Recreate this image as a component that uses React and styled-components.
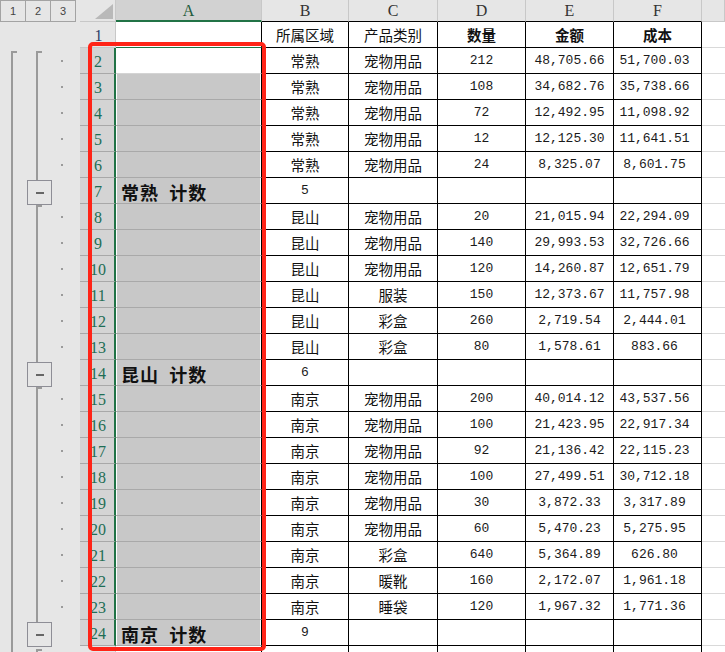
import React from 'react';
import styled, { createGlobalStyle } from 'styled-components';

const GlobalStyle = createGlobalStyle`
  html, body { margin: 0; padding: 0; background: #fff; }
  body { font-family: "Noto Sans CJK SC", "Liberation Sans", sans-serif; }
`;

const GREEN = '#217346';
const CJK = '"Noto Sans CJK SC", sans-serif';
const MONO = '"Liberation Mono", "DejaVu Sans Mono", monospace';

const COLS = ['A', 'B', 'C', 'D', 'E', 'F', ''];

const rows = [
  ['', '常熟', '宠物用品', '212', '48,705.66', '51,700.03'],
  ['', '常熟', '宠物用品', '108', '34,682.76', '35,738.66'],
  ['', '常熟', '宠物用品', '72', '12,492.95', '11,098.92'],
  ['', '常熟', '宠物用品', '12', '12,125.30', '11,641.51'],
  ['', '常熟', '宠物用品', '24', '8,325.07', '8,601.75'],
  ['常熟  计数', '5', '', '', '', ''],
  ['', '昆山', '宠物用品', '20', '21,015.94', '22,294.09'],
  ['', '昆山', '宠物用品', '140', '29,993.53', '32,726.66'],
  ['', '昆山', '宠物用品', '120', '14,260.87', '12,651.79'],
  ['', '昆山', '服装', '150', '12,373.67', '11,757.98'],
  ['', '昆山', '彩盒', '260', '2,719.54', '2,444.01'],
  ['', '昆山', '彩盒', '80', '1,578.61', '883.66'],
  ['昆山  计数', '6', '', '', '', ''],
  ['', '南京', '宠物用品', '200', '40,014.12', '43,537.56'],
  ['', '南京', '宠物用品', '100', '21,423.95', '22,917.34'],
  ['', '南京', '宠物用品', '92', '21,136.42', '22,115.23'],
  ['', '南京', '宠物用品', '100', '27,499.51', '30,712.18'],
  ['', '南京', '宠物用品', '30', '3,872.33', '3,317.89'],
  ['', '南京', '宠物用品', '60', '5,470.23', '5,275.95'],
  ['', '南京', '彩盒', '640', '5,364.89', '626.80'],
  ['', '南京', '暖靴', '160', '2,172.07', '1,961.18'],
  ['', '南京', '睡袋', '120', '1,967.32', '1,771.36'],
  ['南京  计数', '9', '', '', '', ''],
  ['', '', '', '', '', ''],
];

// outline groups: [first detail row, summary row]
const groups = [[2, 7], [8, 14], [15, 24]];
const rowTop = (r) => 48 + (r - 2) * 26;

const Page = styled.div`
  position: relative;
  width: 725px;
  height: 652px;
  overflow: hidden;
  display: flex;
`;

const Gutter = styled.div`
  width: 80px;
  flex: none;
  background: #e6e6e6;
  display: flex;
  flex-direction: column;
`;

const Levels = styled.div`
  display: flex;
  height: 22px;
`;

const LevelButton = styled.div`
  width: 26px;
  height: 22px;
  box-sizing: border-box;
  border: 1px solid #a3a3a3;
  margin-right: -1px;
  display: flex;
  align-items: center;
  justify-content: center;
  font: 11px "Liberation Sans", sans-serif;
  color: #444;
`;

const Grid = styled.div`
  flex: 1;
  display: grid;
  grid-template-columns: 36px 146px 87px 89px 88px 88px 88px 1fr;
  grid-template-rows: 22px;
  grid-auto-rows: 26px;
`;

const Corner = styled.div`
  background: #e6e6e6;
  border-right: 1px solid #c8c8c8;
  border-bottom: 1px solid #c8c8c8;
  box-sizing: border-box;
  display: flex;
  align-items: flex-end;
  justify-content: flex-end;
  padding: 0 2px 2px 0;
`;

const ColHead = styled.div`
  box-sizing: border-box;
  background: ${(p) => (p.$active ? '#d2d2d2' : '#e6e6e6')};
  border-right: 1px solid #c8c8c8;
  border-bottom: ${(p) => (p.$active ? `2px solid ${GREEN}` : `1px solid ${p.$line}`)};
  display: flex;
  align-items: center;
  justify-content: center;
  font: 16px "Liberation Serif", serif;
  color: ${(p) => (p.$active ? '#1e5c3c' : '#333')};
  padding-top: ${(p) => (p.$active ? '1px' : '0')};
`;

const RowHead = styled.div`
  box-sizing: border-box;
  background: ${(p) => (p.$selected ? '#d4d4d4' : '#e6e6e6')};
  border-bottom: 1px solid ${(p) => (p.$selected ? '#a8a8a8' : '#c8c8c8')};
  border-right: ${(p) => (p.$selected ? `2px solid ${GREEN}` : '1px solid #c8c8c8')};
  display: flex;
  align-items: flex-end;
  justify-content: center;
  padding: 0 0 1px 2px;
  font: 16px/20px "Liberation Serif", serif;
  color: ${(p) => (p.$selected ? '#1f6e55' : '#2c3f66')};
`;

const ACell = styled.div`
  box-sizing: border-box;
  background: ${(p) => (p.$selected ? '#c8c8c8' : '#fff')};
  border-right: 1px solid #000;
  border-bottom: 1px solid ${(p) => (p.$topSel ? GREEN : p.$selected ? '#a9a9a9' : '#d4d4d4')};
  box-shadow: ${(p) => (p.$selected ? 'inset 1px 0 0 #fff, inset -1px 0 0 #fff' : 'none')};
  display: flex;
  align-items: flex-end;
  padding: 0 0 0 5px;
  font: 700 18px/22px ${CJK};
  letter-spacing: 1px;
  color: #111;
  white-space: pre;
`;

const Cell = styled.div`
  box-sizing: border-box;
  border-right: 1px solid #000;
  border-bottom: 1px solid #000;
  display: flex;
  align-items: flex-end;
  justify-content: center;
  padding: 0 ${(p) => (p.$shift ? '6px' : '0')} 2px 0;
  font: ${(p) => (p.$bold ? 700 : 400)} 14.5px/20px ${CJK};
  color: #111;
  white-space: nowrap;
`;

const Num = styled(Cell)`
  font: 13px/20px ${MONO};
  color: #1a1a1a;
  padding-bottom: 2px;
`;

const Blank = styled.div`
  border-bottom: 1px solid #d9d9d9;
  box-sizing: border-box;
`;

const Callout = styled.div`
  position: absolute;
  left: 88px;
  top: 42px;
  width: 178px;
  height: 609px;
  box-sizing: border-box;
  border: 4px solid #ff2417;
  border-radius: 5px;
  pointer-events: none;
`;

function OutlineBars() {
  const detailRows = [];
  groups.forEach(([a, s]) => {
    for (let r = a; r < s; r++) detailRows.push(r);
  });
  return (
    <svg width="80" height="630" viewBox="0 22 80 630">
      {/* level 1 bracket */}
      <rect x="11" y="51" width="6" height="2" fill="#9a9a9a" />
      <rect x="11" y="51" width="2" height="610" fill="#9a9a9a" />
      {/* level 2 brackets */}
      {groups.map(([a, s], i) => {
        const start = i === 0 ? rowTop(a) + 3 : rowTop(a) + 1;
        const box = rowTop(s) + 2;
        return (
          <g key={a}>
            <rect x="36" y={start} width="6" height="2" fill="#9a9a9a" />
            <rect x="36" y={start} width="2" height={box - start} fill="#9a9a9a" />
            <rect x="27.5" y={box + 0.5} width="24" height="24" fill="#e6e6e6" stroke="#8e8e96" />
            <rect x="36" y={box + 12} width="8" height="2" fill="#666" />
          </g>
        );
      })}
      <rect x="36" y="649" width="6" height="2" fill="#9a9a9a" />
      <rect x="36" y="649" width="2" height="10" fill="#9a9a9a" />
      {detailRows.map((r) => (
        <rect key={r} x="61" y={rowTop(r) + 12} width="2" height="2" fill="#9a9a9a" />
      ))}
    </svg>
  );
}

export default function App() {
  return (
    <>
      <GlobalStyle />
      <Page>
        <Gutter>
          <Levels>
            <LevelButton>1</LevelButton>
            <LevelButton>2</LevelButton>
            <LevelButton>3</LevelButton>
          </Levels>
          <OutlineBars />
        </Gutter>
        <Grid>
          <Corner>
            <svg width="18" height="15" viewBox="0 0 18 15">
              <polygon points="18,0 18,15 0,15" fill="#b9b9b9" />
            </svg>
          </Corner>
          {COLS.map((c, i) => (
            <ColHead key={i} $active={c === 'A'} $line={c === '' ? '#c8c8c8' : '#000'}>
              {c}
            </ColHead>
          ))}

          <RowHead>1</RowHead>
          <ACell $topSel />
          <Cell>所属区域</Cell>
          <Cell>产品类别</Cell>
          <Cell $bold>数量</Cell>
          <Cell $bold>金额</Cell>
          <Cell $bold>成本</Cell>
          <Blank />

          {rows.map((r, i) => {
            const n = i + 2;
            const sel = n <= 24;
            return (
              <React.Fragment key={n}>
                <RowHead $selected={sel}>{sel ? n : ''}</RowHead>
                <ACell $selected={sel && n !== 2}>{r[0]}</ACell>
                {r[0] ? <Num>{r[1]}</Num> : <Cell>{r[1]}</Cell>}
                <Cell>{r[2]}</Cell>
                <Num>{r[3]}</Num>
                <Num>{r[4]}</Num>
                <Num $shift>{r[5]}</Num>
                <Blank />
              </React.Fragment>
            );
          })}
        </Grid>
        <Callout />
      </Page>
    </>
  );
}
